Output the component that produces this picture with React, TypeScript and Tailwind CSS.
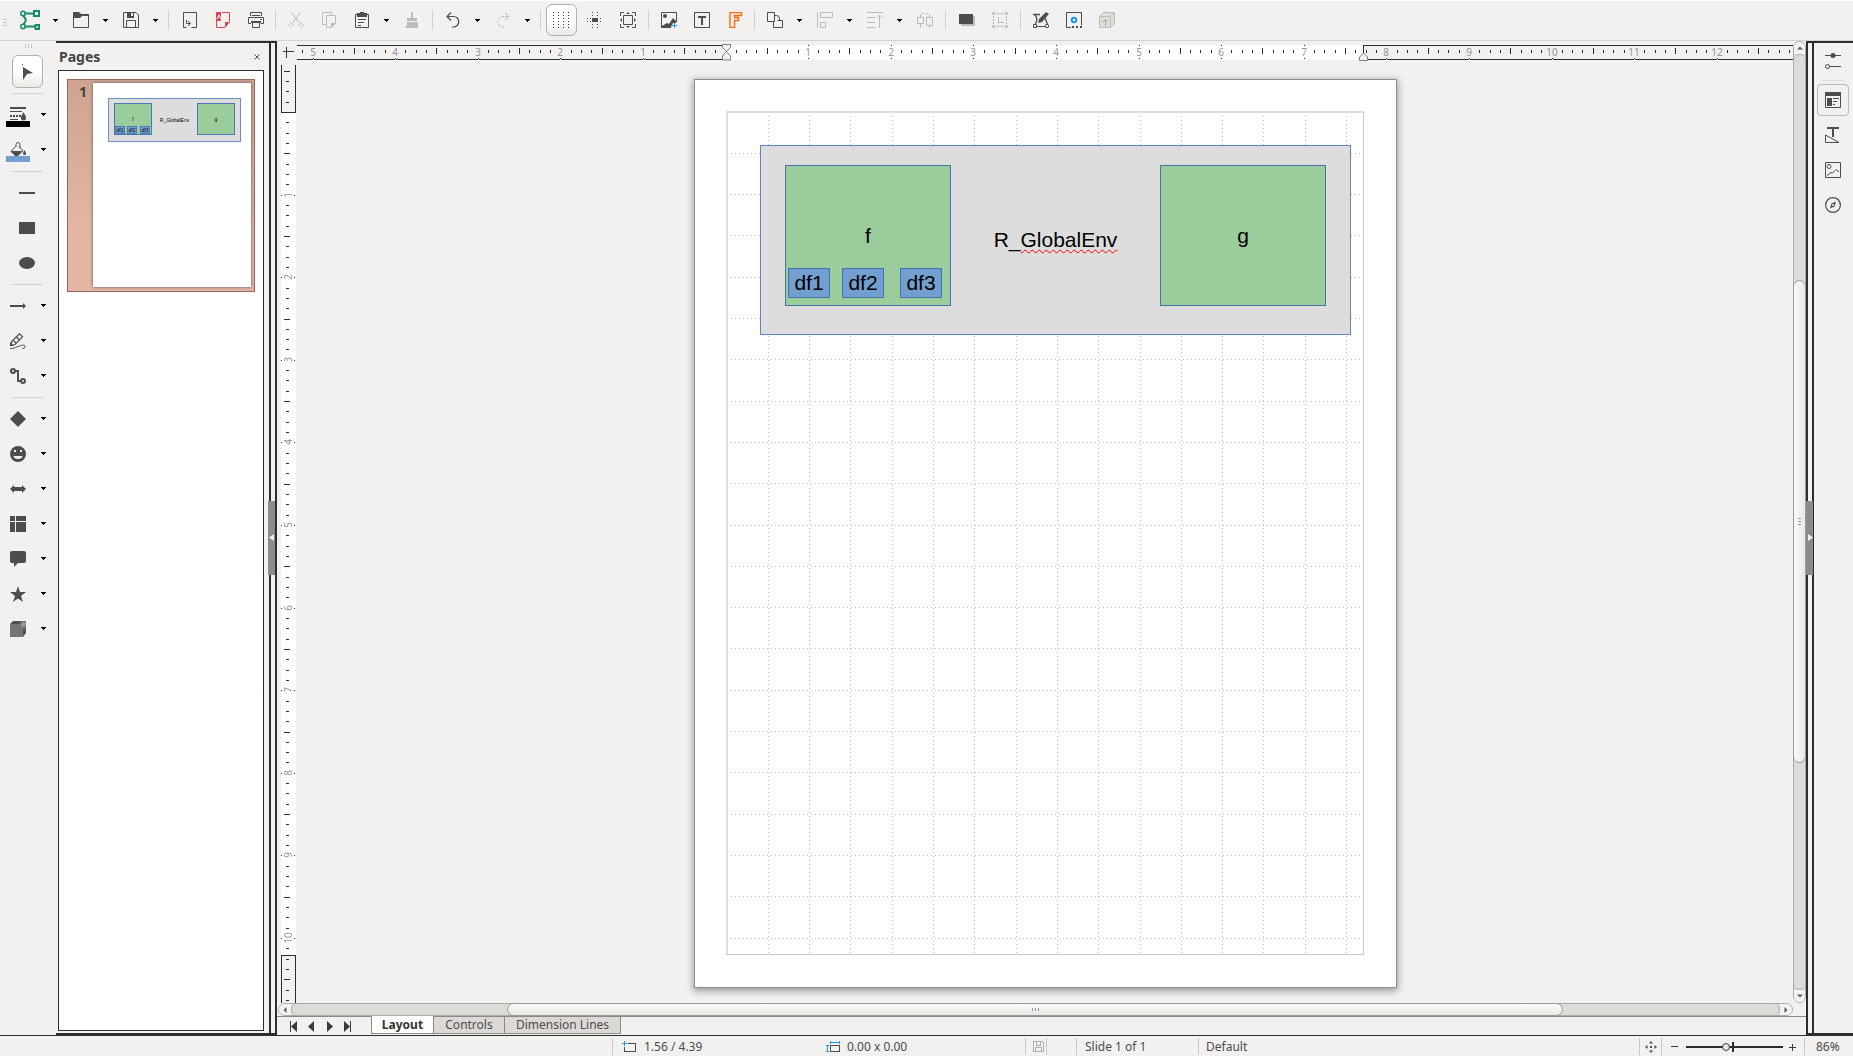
import type { ReactNode } from "react";

const DARK = "#4d4d4d";
const OFF = "#bdbcba";
const UNIT = 82.6;

function Icon({ children, size = 16 }: { children: ReactNode; size?: number }) {
  return (
    <svg width={size} height={size} viewBox={`0 0 ${size} ${size}`} fill="none" stroke={DARK} strokeWidth="1" className="shrink-0" aria-hidden="true">
      {children}
    </svg>
  );
}

function Caret() {
  return (
    <svg width="5" height="3" viewBox="0 0 5 3" shapeRendering="crispEdges" aria-hidden="true">
      <path d="M0 0h5v1H4v1H3v1H2V2H1V1H0z" fill="#000" />
    </svg>
  );
}

/* ---------- top toolbar ---------- */

const icons: Record<string, ReactNode> = {
  draw: (
    <Icon size={20}>
      <g stroke="#118a6e" strokeWidth="2">
        <circle cx="3" cy="3.5" r="2.2" strokeWidth="1.6" />
        <circle cx="3" cy="16.5" r="2.2" strokeWidth="1.6" />
        <path d="M5 3.5h9M5 16.5h10M3.5 6c3 3.500 3 5 0 8.500" />
        <path d="M14 1h5v5h-5zM15.500 15h3.500v4h-3.500z" />
      </g>
    </Icon>
  ),
  open: (
    <Icon>
      <path d="M.5 4v11.500h15V3" />
      <path d="M0 0h6l2 2h8v2H9L7 6H0z" fill={DARK} stroke="none" />
    </Icon>
  ),
  save: (
    <Icon>
      <path d="M.5.5h12.500l2.500 2.500v12.500H.5z" />
      <path d="M4 0h7v6H4zm4 1v3h2V1z" fill={DARK} fillRule="evenodd" stroke="none" />
      <path d="M3.500 15V8.500h9V15" />
    </Icon>
  ),
  export: (
    <Icon>
      <path d="M4.500 15.500h-3V.5h13v15h-5" />
      <path d="M4.500 8v3.500H8M6 9l2.500 2.500L6 14" />
    </Icon>
  ),
  pdf: (
    <Icon>
      <path d="M1 0h5v9H1z" fill="#da4453" stroke="none" />
      <path d="M2 7l2-4 2 4" stroke="#fff" />
      <path d="M7 .5h7.500V10M1.500 9v6.500H10" stroke="#da4453" />
      <path d="M15 10l-5 6v-6z" fill="#da4453" stroke="none" />
    </Icon>
  ),
  print: (
    <Icon>
      <path d="M2.500 4V.5h11V4M4 3.500h8" />
      <path d="M3 11.500H.5v-6h15v6H13" />
      <path d="M3 9h10v2H3z" fill={DARK} stroke="none" />
      <path d="M4.500 10v5.500h7V10" />
      <path d="M12 7.500h2" />
    </Icon>
  ),
  cut: (
    <Icon>
      <g stroke={OFF}>
        <path d="M3 0l8.500 11M13 0L4.500 11" />
        <circle cx="3" cy="13" r="2" strokeDasharray="1.500 1" />
        <circle cx="13" cy="13" r="2" strokeDasharray="1.500 1" />
      </g>
    </Icon>
  ),
  copy: (
    <Icon>
      <g stroke={OFF}>
        <path d="M5 12.500H1.500V.5h9V3" />
        <path d="M5.500 3.500h9V11l-4 4.500h-5z" />
        <path d="M15 11l-5 5v-5z" fill={OFF} stroke="none" />
      </g>
    </Icon>
  ),
  paste: (
    <Icon>
      <path d="M1.500 2.500h13v13h-13z" />
      <path d="M3 1h3V0h4v1h3v4H3z" fill={DARK} stroke="none" />
      <path d="M4 7.500h8M4 10.500h6M4 13.500h3" />
    </Icon>
  ),
  brush: (
    <Icon>
      <path d="M7 0h2v6h4v3H3V6h4zM3 10h10l1 1v5H1l2-3z" fill={OFF} stroke="none" />
    </Icon>
  ),
  undo: (
    <Icon>
      <path d="M2 4.500h6.500a5.200 5.200 0 010 10.500H7M6 0.500l-4 4 4 4" strokeWidth="1.200" />
    </Icon>
  ),
  redo: (
    <Icon>
      <path d="M13.500 4.500H8a5 5 0 000 10.500h1" stroke={OFF} strokeDasharray="3 1" />
      <path d="M10 1l3.500 3.500L10 8" stroke={OFF} />
    </Icon>
  ),
  grid: (
    <Icon size={17}>
      <path d="M.5 0v17M5.500 0v17M10.500 0v17M15.500 0v17" strokeDasharray="1 2" stroke="#333" />
    </Icon>
  ),
  helplines: (
    <Icon>
      <path d="M5 6h6v4H5z" fill={DARK} stroke="none" />
      <path d="M5.500 0v5M10.500 0v5M5.500 12v5M10.500 12v5M0 6.500h4M0 9.500h4M13 6.500h4M13 9.500h4" strokeDasharray="1 2" />
    </Icon>
  ),
  zoom: (
    <Icon>
      <path d="M3.500 3.500h9v9h-9z" />
      <path d="M.5 4V.5H4M12 .5h3.500V4M15.500 12v3.500H12M4 15.500H.5V12" />
      <path d="M6 2l2-2 2 2zM6 14l2 2 2-2zM2 6L0 8l2 2zM14 6l2 2-2 2z" fill={DARK} stroke="none" />
    </Icon>
  ),
  image: (
    <Icon>
      <path d="M10 15.500H.5V.5h15V10" />
      <circle cx="4" cy="4" r="2" fill={DARK} stroke="none" />
      <path d="M1 14l5-3 2 1 4-6 3 3v2h-3l-2 4H1z" fill={DARK} stroke="none" />
      <path d="M13.500 11v5M11 13.500h5" stroke="#1e96f0" />
    </Icon>
  ),
  text: (
    <Icon>
      <path d="M.5.5h15v15H.5z" />
      <path d="M4 4h8v2H9v7H7V6H4z" fill={DARK} stroke="none" />
      <path d="M0 1.500h1M15 15.500h1" />
    </Icon>
  ),
  fontwork: (
    <Icon>
      <path d="M3 15.500V.5h11.500v3H7.500v2h4v3h-4v7z" stroke="#f96a0c" strokeWidth="1.400" />
    </Icon>
  ),
  arrange: (
    <Icon>
      <path d="M.5.5h7v9h-7z" />
      <path d="M7.500 3.500h2a3 3 0 013 3V8M10.500 8.500h5v7h-9V10" />
    </Icon>
  ),
  align: (
    <Icon>
      <path d="M.5 0v16M3.500.5h12v5h-12zM3.500 10.500h5v5h-5z" stroke={OFF} />
    </Icon>
  ),
  position: (
    <Icon>
      <path d="M0 .5h16M0 5.500h8M0 10.500h8M0 15.500h8M12.500 3v13M10 5.500l2.500-2.500L15 5.500" stroke={OFF} />
    </Icon>
  ),
  distribute: (
    <Icon>
      <path d="M.5 5.500h6v6h-6zM9.500 5.500h6v8h-6zM3.500 2v3M3.500 12v4M12.500 2v3M12.500 14v2M5 1.500h2M9 1.500h2" stroke={OFF} />
    </Icon>
  ),
  shadow: (
    <Icon>
      <path d="M2 4h14v10H2z" fill={OFF} stroke="none" />
      <path d="M0 2h14v10H0z" fill={DARK} stroke="none" />
    </Icon>
  ),
  crop: (
    <Icon>
      <g stroke={OFF}>
        <path d="M.5.5h2v2h-2zM13.500.5h2v2h-2zM.5 13.500h2v2h-2zM13.500 13.500h2v2h-2z" />
        <path d="M4 1.500h9M4 14.500h9M1.500 4v9M14.500 4v9" strokeDasharray="2 1" />
        <path d="M6.500 5v5.500H12" />
      </g>
    </Icon>
  ),
  points: (
    <Icon>
      <path d="M0 2.500h7M2 3c3 3 2 6 .5 9M11 4l3.500 8" strokeWidth="1.300" />
      <path d="M13 0l3 2-7 8-4 1 1-4z" fill={DARK} stroke="none" />
      <path d="M.5 12.500h3v3h-3zM4 14.500h8" />
      <circle cx="14" cy="14" r="1.700" />
    </Icon>
  ),
  glue: (
    <Icon>
      <path d="M5 15.500H.5V.5h15V13" />
      <path d="M6 15h2M10 15h2M14 15h2" strokeWidth="2" />
      <circle cx="8" cy="8" r="2.200" stroke="#1e96f0" strokeWidth="2" />
    </Icon>
  ),
  extrude: (
    <Icon>
      <g stroke={OFF}>
        <path d="M.5 4.500l4-4h11v11l-4 4H.5z" fill="#deddda" />
        <path d="M.5 4.500h11v11M11.500 4.500l4-4" />
        <path d="M6.500 14V7.500M4 10l2.500-2.500L9 10" stroke="#a9a8a6" />
      </g>
    </Icon>
  ),
};

type Tool = { icon: string; label: string; menu?: boolean; active?: boolean };
type ToolGroup = { gap: string; tools: Tool[] };

const toolGroups: ToolGroup[] = [
  {
    gap: "",
    tools: [
      { icon: "draw", label: "New", menu: true },
      { icon: "open", label: "Open", menu: true },
      { icon: "save", label: "Save", menu: true },
    ],
  },
  {
    gap: "flex w-[9px] justify-center",
    tools: [
      { icon: "export", label: "Export" },
      { icon: "pdf", label: "Export as PDF" },
      { icon: "print", label: "Print" },
    ],
  },
  {
    gap: "flex w-[7px] justify-center",
    tools: [
      { icon: "cut", label: "Cut" },
      { icon: "copy", label: "Copy" },
      { icon: "paste", label: "Paste", menu: true },
      { icon: "brush", label: "Clone formatting" },
    ],
  },
  {
    gap: "flex w-[8px] justify-center",
    tools: [
      { icon: "undo", label: "Undo", menu: true },
      { icon: "redo", label: "Redo", menu: true },
    ],
  },
  {
    gap: "flex w-[9px] justify-center",
    tools: [
      { icon: "grid", label: "Display grid", active: true },
      { icon: "helplines", label: "Helplines while moving" },
      { icon: "zoom", label: "Zoom and pan" },
    ],
  },
  {
    gap: "flex w-[8px] justify-center",
    tools: [
      { icon: "image", label: "Insert image" },
      { icon: "text", label: "Insert text box" },
      { icon: "fontwork", label: "Insert fontwork" },
    ],
  },
  {
    gap: "flex w-[7px] justify-center",
    tools: [
      { icon: "arrange", label: "Transformations", menu: true },
      { icon: "align", label: "Align", menu: true },
      { icon: "position", label: "Arrange", menu: true },
      { icon: "distribute", label: "Distribute" },
    ],
  },
  {
    gap: "flex w-[9px] justify-center",
    tools: [
      { icon: "shadow", label: "Shadow" },
      { icon: "crop", label: "Crop image" },
    ],
  },
  {
    gap: "flex w-[8px] justify-center",
    tools: [
      { icon: "points", label: "Edit points" },
      { icon: "glue", label: "Glue points" },
      { icon: "extrude", label: "Toggle extrusion" },
    ],
  },
];

function Toolbar() {
  return (
    <header className="flex h-[41px] shrink-0 items-start border-t border-b border-t-white border-b-[#d5d3d0] pt-[3px]">
      <div className="flex h-8 w-[14px] flex-col items-start justify-center gap-[2px] pt-1 pl-[3px]">
        <span className="h-px w-1 bg-[#c8c6c3]" />
        <span className="h-px w-1 bg-[#c8c6c3]" />
        <span className="h-px w-1 bg-[#c8c6c3]" />
      </div>
      {toolGroups.map((group) => (
        <div key={group.tools[0].icon} className="flex items-center">
          {group.gap && (
            <div className={group.gap}>
              <span className="h-5 w-px bg-[#d3d1ce]" />
            </div>
          )}
          {group.tools.map((t) => (
            <div key={t.icon} className="flex items-center">
              <button
                type="button"
                aria-label={t.label}
                className={
                  t.active
                    ? "mr-px ml-px flex h-8 w-[31px] items-center justify-center rounded-md border border-[#b3b0ac] bg-linear-to-b from-white via-white to-[#ebe9e7]"
                    : t.icon === "draw"
                      ? "flex h-8 w-[33px] items-center pl-[6px]"
                      : "flex h-8 w-[33px] items-center pl-[9px]"
                }
              >
                {icons[t.icon]}
              </button>
              {t.menu && (
                <button type="button" aria-label={`${t.label} options`} className="flex h-8 w-[17px] items-center justify-center">
                  <Caret />
                </button>
              )}
            </div>
          ))}
        </div>
      ))}
    </header>
  );
}

/* ---------- left drawing toolbar ---------- */

const lineIcon = (
  <span className="flex flex-col">
    <span className="flex h-[14px] justify-center">
      <Icon>
        <path d="M0 1h16" strokeWidth="2" />
        <path d="M0 4.500h12M0 12.500h8" />
        <path d="M0 9h11" strokeWidth="2" strokeDasharray="2 1" />
        <path d="M13.500 5c1.500 3 2.500 4 2.500 6a2.500 2.500 0 01-5 0c0-2 1-3 2.500-6z" fill={DARK} stroke="none" />
      </Icon>
    </span>
    <span className="h-[6px] w-6 bg-black" />
  </span>
);

const fillIcon = (
  <span className="flex flex-col">
    <span className="flex h-[14px] justify-center">
      <Icon>
        <path d="M6 5V2.500a2 2 0 014 0V6M5.500 4.500L1 9.500l4 3.500h3l5-4-4-4.500" />
        <path d="M1 9h11l-4 5H5z" fill={DARK} stroke="none" />
        <path d="M14.500 8c1 2 1.500 2.500 1.500 3.500a1.500 1.500 0 01-3 0c0-1 .5-1.500 1.500-3.500z" fill={DARK} stroke="none" />
      </Icon>
    </span>
    <span className="h-[6px] w-6 bg-[#729fcf]" />
  </span>
);

type Shape = { label: string; icon: ReactNode; menu?: boolean; wide?: boolean };

const shapeGroups: Shape[][] = [
  [
    { label: "Line color", icon: lineIcon, menu: true, wide: true },
    { label: "Fill color", icon: fillIcon, menu: true, wide: true },
  ],
  [
    { label: "Line", icon: <Icon><path d="M0 8h16" strokeWidth="2" /></Icon> },
    { label: "Rectangle", icon: <Icon><path d="M0 2h16v12H0z" fill={DARK} stroke="none" /></Icon> },
    { label: "Ellipse", icon: <Icon><ellipse cx="8" cy="8" rx="8" ry="6" fill={DARK} stroke="none" /></Icon> },
  ],
  [
    { label: "Lines and arrows", menu: true, icon: <Icon><path d="M0 8h14" strokeWidth="2" /><path d="M13 5l3 3-3 3z" fill={DARK} stroke="none" /></Icon> },
    {
      label: "Curves and polygons",
      menu: true,
      icon: (
        <Icon>
          <path d="M9.500.8l3 3L5 11.500 1 12.500l.8-4.200zM3 7l3 3M6.500 4l3 3" strokeWidth="1.200" />
          <path d="M0 9l4 4H0z" fill={DARK} stroke="none" />
          <path d="M0 15.500c5 0 5-1 8-2s7-2.500 7 0-2 2-3 1.500" />
        </Icon>
      ),
    },
    {
      label: "Connectors",
      menu: true,
      icon: (
        <Icon>
          <g strokeWidth="2">
            <circle cx="3" cy="3" r="2" />
            <circle cx="13" cy="13" r="2" />
            <path d="M5 3h3v10h3" />
          </g>
        </Icon>
      ),
    },
  ],
  [
    { label: "Basic shapes", menu: true, icon: <Icon><path d="M8 0l8 8-8 8-8-8z" fill={DARK} stroke="none" /></Icon> },
    {
      label: "Symbol shapes",
      menu: true,
      icon: (
        <Icon>
          <path d="M8 0a8 8 0 100 16A8 8 0 008 0zM4 4h2v2H4zm6 0h2v2h-2zM3.500 10h9c0 2-2 3-4.500 3s-4.500-1-4.500-3z" fill={DARK} fillRule="evenodd" stroke="none" />
        </Icon>
      ),
    },
    { label: "Block arrows", menu: true, icon: <Icon><path d="M0 8l4-4v2h8V4l4 4-4 4v-2H4v2z" fill={DARK} stroke="none" /></Icon> },
    { label: "Flowchart", menu: true, icon: <Icon><path d="M0 0h5v5H0zM6 0h10v5H6zM0 6h5v10H0zM6 6h10v10H6z" fill={DARK} stroke="none" /></Icon> },
    { label: "Callouts", menu: true, icon: <Icon><path d="M2 0h12a2 2 0 012 2v8a2 2 0 01-2 2H8l-4 4v-4H2a2 2 0 01-2-2V2a2 2 0 012-2z" fill={DARK} stroke="none" /></Icon> },
    { label: "Stars and banners", menu: true, icon: <Icon><path d="M8 0l2 6h6l-5 4 2 6-5-3.500L3 16l2-6-5-4h6z" fill={DARK} stroke="none" /></Icon> },
    {
      label: "3D objects",
      menu: true,
      icon: (
        <Icon>
          <defs>
            <radialGradient id="cube-light" cx="0.800" cy="0.250" r="0.500">
              <stop offset="0" stopColor="#b8b8b8" />
              <stop offset="1" stopColor="#757575" stopOpacity="0" />
            </radialGradient>
          </defs>
          <path d="M0 3l3-3h13v12l-3 4z" fill="#505050" stroke="none" />
          <path d="M0 3h13v13H0z" fill="#757575" stroke="none" />
          <path d="M5 0h11v10l-3 3H5z" fill="url(#cube-light)" stroke="none" />
        </Icon>
      ),
    },
  ],
];

function DrawingTools() {
  return (
    <nav aria-label="Drawing" className="flex w-14 shrink-0 flex-col">
      <div className="flex h-[13px] justify-center gap-[2px] pt-[3px]">
        <span className="h-1 w-px bg-[#c8c6c3]" />
        <span className="h-1 w-px bg-[#c8c6c3]" />
        <span className="h-1 w-px bg-[#c8c6c3]" />
      </div>
      <div className="flex h-[35px] items-center pl-3">
        <button type="button" aria-label="Select" className="flex h-[33px] w-[31px] items-center justify-center rounded-md border border-[#b3b0ac] bg-linear-to-b from-white via-white to-[#ebe9e7]">
          <Icon>
            <path d="M3 3l10 6-6 1-4 6z" fill={DARK} stroke="none" />
            <path d="M2 .5h1" />
          </Icon>
        </button>
      </div>
      {shapeGroups.map((group, g) => (
        <div key={g} className="flex flex-col">
          <div className="flex h-2 items-center pl-3">
            <span className="h-px w-[31px] bg-[#d3d1ce]" />
          </div>
          {group.map((s) => (
            <div key={s.label} className="flex h-[35px]">
              <button
                type="button"
                aria-label={s.label}
                className={s.wide ? "flex w-9 items-start pt-[10px] pl-[6px]" : s.menu ? "flex w-9 items-start pt-[10px] pl-[10px]" : "flex w-[46px] items-start pt-[10px] pl-[19px]"}
              >
                {s.icon}
              </button>
              {s.menu && (
                <button type="button" aria-label={`${s.label} options`} className="flex w-[15px] items-center justify-center">
                  <Caret />
                </button>
              )}
            </div>
          ))}
        </div>
      ))}
    </nav>
  );
}

/* ---------- pages panel ---------- */

function Thumbnail() {
  return (
    <div className="relative h-[204px] w-[158px] bg-white text-[5px] leading-none text-black shadow-[0_0_3px_0_#555] [font-family:'Liberation_Sans',Arial,sans-serif]">
      <div className="absolute top-[15px] left-[15px] flex h-[44px] w-[133px] items-center justify-center border border-[#6a8fc0] bg-[#ddd]">R_GlobalEnv</div>
      <div className="absolute top-[20px] left-[21px] flex h-[32px] w-[38px] items-center justify-center border border-[#4a79b5] bg-[#9acd9b]">f</div>
      <div className="absolute top-[20px] left-[104px] flex h-[32px] w-[38px] items-center justify-center border border-[#4a79b5] bg-[#9acd9b]">g</div>
      <div className="absolute top-[43px] left-[22px] flex h-[8px] w-[10px] items-center justify-center border border-[#4a79b5] bg-[#729fcf]">df1</div>
      <div className="absolute top-[43px] left-[34px] flex h-[8px] w-[10px] items-center justify-center border border-[#4a79b5] bg-[#729fcf]">df2</div>
      <div className="absolute top-[43px] left-[47px] flex h-[8px] w-[10px] items-center justify-center border border-[#4a79b5] bg-[#729fcf]">df3</div>
    </div>
  );
}

function PagesPanel() {
  return (
    <aside className="flex w-[213px] shrink-0 flex-col pr-[5px] pb-[2px] pl-[2px]">
      <div className="flex h-[27px] items-center justify-between pr-px pl-px">
        <h2 className="text-sm font-bold text-[#454545]">Pages</h2>
        <button type="button" aria-label="Close panel" className="flex h-3 w-3 items-center justify-center">
          <svg width="6" height="6" viewBox="0 0 6 6" stroke={DARK} aria-hidden="true">
            <path d="M.5.5l5 5M5.500.5l-5 5" />
          </svg>
        </button>
      </div>
      <div className="flex-1 border border-[#2d2d2b] bg-white p-2">
        <button type="button" className="flex w-full items-start justify-between border border-[#95695a] bg-linear-to-b from-[#cfa391] to-[#e5b6a4] to-75% pt-[3px] pr-[3px] pb-1 text-left">
          <span className="w-[19px] text-right text-sm leading-[18px] font-bold text-[#454545]">1</span>
          <Thumbnail />
        </button>
      </div>
    </aside>
  );
}

function Splitter({ side }: { side: "left" | "right" }) {
  return (
    <div className="relative w-2 shrink-0 border-x-2 border-[#2d2d2b]">
      <button
        type="button"
        aria-label={side === "left" ? "Hide pages panel" : "Hide sidebar"}
        className={
          side === "left"
            ? "absolute top-1/2 -left-[3px] flex h-[74px] w-[7px] -translate-y-1/2 items-center justify-center bg-[#8b8b8a]"
            : "absolute top-1/2 -left-[2px] flex h-[74px] w-[7px] -translate-y-1/2 items-center justify-center bg-[#8b8b8a]"
        }
      >
        <svg width="6" height="8" viewBox="0 0 6 8" aria-hidden="true">
          <path d={side === "left" ? "M5 0v7L0 3.500z" : "M1 0v7l5-3.500z"} fill="#f1f0ee" />
        </svg>
      </button>
    </div>
  );
}

/* ---------- rulers ---------- */

function range(from: number, to: number) {
  return Array.from({ length: to - from + 1 }, (_, i) => from + i);
}

function HorizontalRuler() {
  const origin = 931;
  const end = origin + 637;
  return (
    <div className="flex h-[17px] min-w-0 flex-1 items-end justify-center overflow-hidden">
      <svg width="2500" height="17" viewBox="0 -1 2500 17" className="shrink-0" shapeRendering="crispEdges" aria-label="Horizontal ruler">
        <rect x={origin} y="0" width={637} height="15" fill="#fff" />
        <path d={`M0 .5H${origin}M0 14.500H${origin}M${end} .5H2500M${end} 14.500H2500M${end + 0.5} 0V15`} stroke="#2d2d2b" />
        {range(-41, 103).map((k) => {
          const x = Math.floor(origin + (k * UNIT) / 8);
          if (k === 0) return null;
          if (k % 8 === 0) {
            const outside = x < origin || x > end;
            return (
              <g key={k}>
                {outside ? <rect x={x} y="14" width="1" height="1" fill="#f2f1ef" /> : <rect x={x} y="0" width="1" height="1" fill="#2d2d2b" />}
                <rect x={x} y="13" width="1" height="1" fill="#2d2d2b" />
                <text x={x} y="11" textAnchor="middle" fontSize="10" fill="#969696">
                  {Math.abs(k / 8)}
                </text>
              </g>
            );
          }
          return k % 4 === 0 ? <rect key={k} x={x} y="3" width="1" height="6" fill="#2d2d2b" /> : <rect key={k} x={x} y="5" width="1" height="3" fill="#2d2d2b" />;
        })}
        <g fill="#f2f1ef" stroke="#7f7f7d" shapeRendering="auto">
          <path d={`M${origin - 3.5} -.5h8v3l-4 4 4 4.500v4h-8v-4l4-4.500-4-4z`} />
          <path d={`M${end - 3.5} 15.500v-3.500l4-4 4 4v3.500z`} />
        </g>
      </svg>
    </div>
  );
}

function VerticalRuler() {
  const origin = 47;
  const end = 890;
  return (
    <div className="relative mt-1 ml-1 w-[15px] overflow-hidden">
      <svg width="15" height="2000" viewBox="0 0 15 2000" className="absolute top-0 left-0" shapeRendering="crispEdges" aria-label="Vertical ruler">
        <rect x="0" y={origin} width="15" height={end - origin} fill="#fff" />
        <path d={`M.5 0V${origin}M14.500 0V${origin}M0 ${origin + 0.5}H15M.5 ${end}V2000M14.500 ${end}V2000M0 ${end + 0.5}H15`} stroke="#2d2d2b" />
        {range(-4, 87).map((k) => {
          const y = Math.round(origin + (k * UNIT) / 8);
          if (k === 0) return null;
          if (k % 8 === 0) {
            return (
              <g key={k}>
                <rect x="0" y={y} width="1" height="1" fill="#2d2d2b" />
                <rect x="13" y={y} width="1" height="1" fill="#2d2d2b" />
                <text x="0" y="0" transform={`translate(11 ${y}) rotate(-90)`} textAnchor="middle" fontSize="10" fill="#969696">
                  {k / 8}
                </text>
              </g>
            );
          }
          return k % 4 === 0 ? <rect key={k} x="3" y={y} width="6" height="1" fill="#2d2d2b" /> : <rect key={k} x="5" y={y} width="3" height="1" fill="#2d2d2b" />;
        })}
      </svg>
    </div>
  );
}

/* ---------- drawing page ---------- */

function GridDots() {
  const step = UNIT / 2;
  return (
    <svg width="638" height="844" viewBox="0 0 638 844" shapeRendering="crispEdges" className="absolute top-[32px] left-[32px]" aria-hidden="true">
      <path d="M1 844V1H638" stroke="#dedede" strokeWidth="2" fill="none" />
      <path d="M637.500 0V843.500H0" stroke="#c9c9c9" fill="none" />
      <g stroke="#bdbdbd" strokeDasharray="1 3">
        {range(1, 15).map((i) => (
          <path key={i} d={`M${Math.floor(1 + i * step) + 0.5} 5V842`} />
        ))}
        {range(1, 20).map((i) => (
          <path key={i} d={`M5 ${Math.floor(1 + i * step) + 0.5}H637`} />
        ))}
      </g>
    </svg>
  );
}

function DrawingPage() {
  return (
    <div className="relative h-[909px] w-[703px] shrink-0 border border-[#8e8e8e] bg-white shadow-[0_2px_7px_1px_#9a9a9a]">
      <div className="absolute -top-px -left-px">
        <div className="relative text-[21px] leading-6 text-black [font-family:'Liberation_Sans',Arial,sans-serif]">
          <GridDots />
          <div className="absolute top-[66px] left-[66px] flex h-[190px] w-[591px] items-center justify-center border border-[#6086bd] bg-[#ddd]">
            <span>
              R_<span className="underline decoration-[#f00] decoration-wavy decoration-1 underline-offset-2">GlobalEnv</span>
            </span>
          </div>
          <div className="absolute top-[86px] left-[91px] flex h-[141px] w-[166px] items-center justify-center border border-[#4573ad] bg-[#9acd9b]">f</div>
          <div className="absolute top-[86px] left-[466px] flex h-[141px] w-[166px] items-center justify-center border border-[#4573ad] bg-[#9acd9b]">g</div>
          <div className="absolute top-[189px] left-[94px] flex h-[30px] w-[42px] items-center justify-center border border-[#4573ad] bg-[#729fcf]">df1</div>
          <div className="absolute top-[189px] left-[148px] flex h-[30px] w-[42px] items-center justify-center border border-[#4573ad] bg-[#729fcf]">df2</div>
          <div className="absolute top-[189px] left-[206px] flex h-[30px] w-[42px] items-center justify-center border border-[#4573ad] bg-[#729fcf]">df3</div>
        </div>
      </div>
    </div>
  );
}

/* ---------- scroll bars ---------- */

function Triangle({ d }: { d: string }) {
  return (
    <svg width="6" height="6" viewBox="0 0 6 6" aria-hidden="true">
      <path d={d} fill="#5a5a58" />
    </svg>
  );
}

function VerticalScrollbar() {
  return (
    <div className="flex w-[13px] shrink-0 flex-col rounded-full border border-[#aeaba7] bg-[#dddcda]">
      <button type="button" aria-label="Scroll up" className="flex h-3 items-center justify-center rounded-t-full bg-[#f4f3f2]">
        <Triangle d="M0 4.500h6L3 1.500z" />
      </button>
      <div className="flex-[226] rounded-t-full border-t border-[#aeaba7]" />
      <div className="-mx-px flex flex-[482] flex-col items-center justify-center gap-[2px] rounded-full border border-[#9d9a96] bg-linear-to-r from-[#fafafa] to-[#e8e7e5]">
        <span className="h-px w-[3px] bg-[#999]" />
        <span className="h-px w-[3px] bg-[#999]" />
        <span className="h-px w-[3px] bg-[#999]" />
      </div>
      <div className="flex-[227] rounded-b-full border-b border-[#aeaba7]" />
      <button type="button" aria-label="Scroll down" className="flex h-3 items-center justify-center rounded-b-full bg-[#f4f3f2]">
        <Triangle d="M0 1.500h6L3 4.500z" />
      </button>
    </div>
  );
}

function HorizontalScrollbar() {
  return (
    <div className="mr-[13px] ml-px flex h-[13px] shrink-0 rounded-full border border-[#aeaba7] bg-[#dddcda]">
      <button type="button" aria-label="Scroll left" className="flex w-3 items-center justify-center rounded-l-full bg-[#f4f3f2]">
        <Triangle d="M4.500 0v6L1.500 3z" />
      </button>
      <div className="flex-[216] rounded-l-full border-l border-[#aeaba7]" />
      <div className="-my-px flex flex-[1056] items-center justify-center gap-[2px] rounded-full border border-[#9d9a96] bg-linear-to-b from-[#fafafa] to-[#e8e7e5]">
        <span className="h-[3px] w-px bg-[#999]" />
        <span className="h-[3px] w-px bg-[#999]" />
        <span className="h-[3px] w-px bg-[#999]" />
      </div>
      <div className="flex-[217] rounded-r-full border-r border-[#aeaba7]" />
      <button type="button" aria-label="Scroll right" className="flex w-3 items-center justify-center rounded-r-full bg-[#f4f3f2]">
        <Triangle d="M1.500 0v6L4.500 3z" />
      </button>
    </div>
  );
}

function LayerTabs() {
  const arrows = [
    { label: "First tab", d: "M0 0h1v11H0zM7 0v11L1 5.500z" },
    { label: "Previous tab", d: "M6 0v11L0 5.500z" },
    { label: "Next tab", d: "M1 0v11l6-5.500z" },
    { label: "Last tab", d: "M0 0v11l6-5.500zM6 0h1v11H6z" },
  ];
  return (
    <div className="flex h-[19px] shrink-0 border-t border-[#8b8985]">
      <div className="flex w-[94px] items-center gap-[11px] pl-[13px]">
        {arrows.map((a) => (
          <button key={a.label} type="button" aria-label={a.label}>
            <svg width="7" height="11" viewBox="0 0 7 11" aria-hidden="true">
              <path d={a.d} fill="#3a3a3a" />
            </svg>
          </button>
        ))}
      </div>
      <div role="tablist" className="flex pb-px text-xs leading-4 text-[#4c4c4c]">
        <button type="button" role="tab" aria-selected="true" className="-mt-px w-[63px] border border-t-0 border-[#8b8985] bg-white font-bold text-[#333]">
          Layout
        </button>
        <button type="button" role="tab" aria-selected="false" className="w-[71px] border-r border-b border-[#8b8985] bg-[#dcd8d5]">
          Controls
        </button>
        <button type="button" role="tab" aria-selected="false" className="w-[116px] border-r border-b border-[#8b8985] bg-[#dcd8d5]">
          Dimension Lines
        </button>
      </div>
    </div>
  );
}

function Workspace() {
  return (
    <main className="flex min-w-0 flex-1 flex-col">
      <div className="flex min-h-0 flex-1">
        <div className="flex min-w-0 flex-1 flex-col pt-[3px]">
          <div className="flex">
            <div className="flex w-5 shrink-0 items-center pl-[6px]">
              <svg width="11" height="11" viewBox="0 0 11 11" stroke="#3a3a3a" shapeRendering="crispEdges" className="shrink-0" aria-hidden="true">
                <path d="M3.500 0v11M0 4.500h11" />
              </svg>
            </div>
            <HorizontalRuler />
          </div>
          <div className="flex min-h-0 flex-1">
            <div className="flex w-5 shrink-0">
              <VerticalRuler />
            </div>
            <div className="flex min-w-0 flex-1 justify-center overflow-hidden pt-[18px] pl-px">
              <DrawingPage />
            </div>
          </div>
        </div>
        <VerticalScrollbar />
      </div>
      <HorizontalScrollbar />
      <LayerTabs />
    </main>
  );
}

/* ---------- right sidebar ---------- */

function Sidebar() {
  return (
    <aside aria-label="Sidebar" className="flex w-[39px] shrink-0 flex-col items-start pl-[3px]">
      <button type="button" aria-label="Sidebar settings" className="flex h-9 w-8 items-center justify-center">
        <Icon>
          <path d="M0 2.500h16M5 13.500h11" />
          <circle cx="8" cy="2.500" r="2.500" fill={DARK} stroke="none" />
          <circle cx="2.500" cy="13.500" r="2" />
        </Icon>
      </button>
      <span className="my-px ml-[5px] h-px w-[22px] bg-[#dbd9d6]" />
      <button type="button" aria-label="Properties" className="mt-[2px] flex h-8 w-8 items-center justify-center rounded border border-[#bdbab6]">
        <Icon>
          <path d="M.5.5h15v15H.5z" />
          <path d="M0 0h16v4H0zM2 6h5v8H2z" fill={DARK} stroke="none" />
          <path d="M8 6.500h6M8 9.500h4M8 12.500h2" />
        </Icon>
      </button>
      <button type="button" aria-label="Styles" className="mt-[3px] flex h-8 w-8 items-center justify-center">
        <Icon>
          <path d="M2 1h12M8 1v9" strokeWidth="2" />
          <path d="M.5 8v7.500h13.500z" />
        </Icon>
      </button>
      <button type="button" aria-label="Gallery" className="mt-[3px] flex h-8 w-8 items-center justify-center">
        <Icon>
          <path d="M.5.5h15v15H.5z" />
          <circle cx="4" cy="4.500" r="2" />
          <path d="M2 13.500l4-3 1.500.5 3.500-3.500 3 2.500" />
        </Icon>
      </button>
      <button type="button" aria-label="Navigator" className="mt-[3px] flex h-8 w-8 items-center justify-center">
        <Icon>
          <circle cx="8" cy="8" r="7.400" strokeWidth="1.200" />
          <path d="M11 4.500L9.500 9.500 5 11.500 6.500 6.500zM8 7a1 1 0 100 2 1 1 0 000-2z" fill={DARK} fillRule="evenodd" stroke="none" />
        </Icon>
      </button>
    </aside>
  );
}

/* ---------- status bar ---------- */

function StatusBar() {
  return (
    <footer className="flex h-[21px] shrink-0 items-stretch border-t border-[#2d2d2b] pt-[2px] pb-px text-xs leading-[18px] text-[#4c4c4c]">
      <div className="flex-[612]" />
      <div className="flex flex-[413]">
        <div className="flex flex-1 items-center border-l border-[#c9c7c3]">
          <div className="flex w-1/2 items-center gap-2 pl-[9px]">
            <svg width="14" height="11" viewBox="0 0 14 11" fill="none" shapeRendering="crispEdges" aria-hidden="true">
              <path d="M2.500 6v4.500h11v-8H6" stroke={DARK} />
              <path d="M2.500 0v5M0 2.500h5" stroke="#1e96f0" />
            </svg>
            <span>1.56 / 4.39</span>
          </div>
          <div className="flex w-1/2 items-center gap-[7px] pl-[7px]">
            <svg width="14" height="11" viewBox="0 0 14 11" fill="none" shapeRendering="crispEdges" aria-hidden="true">
              <path d="M4.500 4.500h9v6h-9z" stroke={DARK} />
              <path d="M4 1.500h10M4.500 0v3M13.500 0v3M1.500 4v7M0 4.500h3M0 10.500h3" stroke="#1e96f0" />
            </svg>
            <span>0.00 x 0.00</span>
          </div>
        </div>
      </div>
      <div className="flex w-[22px] items-center justify-center border-x border-[#c9c7c3]">
        <svg width="11" height="11" viewBox="0 0 11 11" fill="none" stroke="#b0b0b0" shapeRendering="crispEdges" className="ml-1 shrink-0" aria-hidden="true">
          <path d="M.5.5h9l1 1v9H.5zM3.500 1v3h4V1M2.500 10V6.500h6V10" />
        </svg>
      </div>
      <div className="w-[29px]" />
      <div className="w-[122px] border-l border-[#c9c7c3] pl-2">Slide 1 of 1</div>
      <div className="flex flex-[441]">
        <div className="flex-1 border-l border-[#c9c7c3] pl-[7px]">Default</div>
      </div>
      <div className="flex w-[23px] items-center justify-center border-x border-[#c9c7c3]">
        <svg width="12" height="12" viewBox="0 0 12 12" fill={DARK} aria-hidden="true">
          <path d="M4 2.500L6 0l2 2.500zM4 9.500L6 12l2-2.500zM2.500 4L0 6l2.500 2zM9.500 4L12 6 9.500 8zM5 5h2v2H5z" />
        </svg>
      </div>
      <div className="flex w-[142px] items-center pl-[9px]">
        <button type="button" aria-label="Zoom out" className="flex h-4 w-[15px] items-center">
          <span className="h-px w-[7px] bg-[#3a3a3a]" />
        </button>
        <div className="relative flex w-[97px] items-center">
          <input
            type="range"
            aria-label="Zoom"
            min="0"
            max="100"
            defaultValue="41"
            className="h-3 w-[97px] appearance-none bg-transparent [&::-webkit-slider-runnable-track]:h-[2px] [&::-webkit-slider-runnable-track]:bg-[#2d2d2b] [&::-webkit-slider-thumb]:-mt-[3px] [&::-webkit-slider-thumb]:h-2 [&::-webkit-slider-thumb]:w-2 [&::-webkit-slider-thumb]:appearance-none [&::-webkit-slider-thumb]:rounded-full [&::-webkit-slider-thumb]:border [&::-webkit-slider-thumb]:border-solid [&::-webkit-slider-thumb]:border-[#3a3a3a] [&::-webkit-slider-thumb]:bg-[#e6e6ea]"
          />
          <span className="absolute top-1/2 left-[46px] h-[10px] w-[2px] -translate-y-1/2 bg-[#2d2d2b]" />
        </div>
        <button type="button" aria-label="Zoom in" className="ml-[6px] flex h-4 w-3 items-center">
          <svg width="8" height="8" viewBox="0 0 8 8" stroke="#3a3a3a" shapeRendering="crispEdges" aria-hidden="true">
            <path d="M0 4.500h7M3.500 1v7" />
          </svg>
        </button>
      </div>
      <div className="w-[49px] border-l border-[#c9c7c3] pl-[11px]">86%</div>
    </footer>
  );
}

export default function App() {
  return (
    <div className="flex h-screen flex-col overflow-hidden bg-[#f2f1ef] [font-family:'Noto_Sans','Open_Sans',sans-serif]">
      <Toolbar />
      <div className="flex min-h-0 flex-1">
        <DrawingTools />
        <div className="flex shrink-0 border-t-2 border-b-2 border-[#2d2d2b]">
          <PagesPanel />
          <Splitter side="left" />
        </div>
        <Workspace />
        <div className="flex shrink-0 border-t-2 border-b-2 border-[#2d2d2b]">
          <Splitter side="right" />
          <Sidebar />
        </div>
      </div>
      <StatusBar />
    </div>
  );
}
